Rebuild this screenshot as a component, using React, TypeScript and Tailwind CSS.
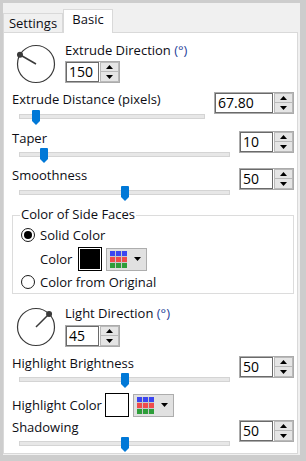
import React from "react";

function Up() {
  return (
    <svg width="7" height="4" viewBox="0 0 7 4">
      <path d="M0 4 L3.5 0 L7 4 Z" fill="#000" />
    </svg>
  );
}
function Down() {
  return (
    <svg width="7" height="4" viewBox="0 0 7 4">
      <path d="M0 0 L7 0 L3.5 4 Z" fill="#000" />
    </svg>
  );
}

function Spin({ value, outerW, inputW }: { value: string; outerW: string; inputW: string }) {
  return (
    <div className={`${outerW} h-[22px] shrink-0 flex border border-[#ababab] bg-white`}>
      <div
        className={`${inputW} h-full border border-[#6a6a6a] flex items-center pl-[2px] text-[14px] leading-none text-black`}
      >
        {value}
      </div>
      <div className="ml-[1px] w-[19px] h-full flex flex-col border border-[#b9b9b9] bg-[#e5e5e5]">
        <div className="h-1/2 flex items-center justify-center border-b border-[#b9b9b9]">
          <Up />
        </div>
        <div className="flex-1 flex items-center justify-center">
          <Down />
        </div>
      </div>
    </div>
  );
}

function Slider({ trackW, frac, mt }: { trackW: number; frac: number; mt: string }) {
  const center = 7 + 4.25 + frac * (trackW - 8.5);
  return (
    <div className={`relative h-[15px] ${mt}`}>
      <div
        className="mt-[4px] ml-[7px] h-[5px] bg-[#e7e7e7] border border-[#d4d4d4]"
        style={{ width: trackW }}
      />
      <svg
        className="absolute top-0"
        style={{ left: center - 4 }}
        width="8"
        height="15"
        viewBox="0 0 8 15"
      >
        <path d="M0 1 Q0 0 1 0 H7 Q8 0 8 1 V11 L4 15 L0 11 Z" fill="#0078d7" />
      </svg>
    </div>
  );
}

function Dial({ angle, mt }: { angle: number; mt: string }) {
  const a = (angle * Math.PI) / 180;
  const r = 18.5;
  const dx = 20 + r * Math.cos(a);
  const dy = 20 - r * Math.sin(a);
  return (
    <svg className={`ml-[4px] shrink-0 ${mt}`} width="40" height="40" viewBox="0 0 40 40">
      <circle cx="20" cy="20" r="18.5" fill="none" stroke="#3a3a3a" strokeWidth="1.2" />
      <line x1="20" y1="20" x2={dx} y2={dy} stroke="#3a3a3a" strokeWidth="1.5" />
      <circle cx={dx} cy={dy} r="3" fill="#3a3a3a" />
    </svg>
  );
}

function Radio({ checked }: { checked?: boolean }) {
  return (
    <div className="w-[14px] h-[14px] rounded-full border border-[#1a1a1a] bg-white flex items-center justify-center shrink-0">
      {checked && <div className="w-[8px] h-[8px] rounded-full bg-black" />}
    </div>
  );
}

function ColorDrop() {
  const cells = [
    "#3c46f0", "#3c46f0", "#3c46f0",
    "#f04b4b", "#f04b4b", "#f04b4b",
    "#2e9e3a", "#2e9e3a", "#2e9e3a",
  ];
  return (
    <div className="ml-[4px] w-[41px] h-[23px] border border-[#adadad] bg-[#e1e1e1] flex items-center pl-[3px]">
      <div className="grid grid-cols-3 gap-[1px] bg-[#c8c8c8] w-[17px] h-[17px]">
        {cells.map((c, i) => (
          <div key={i} style={{ background: c }} />
        ))}
      </div>
      <svg className="ml-[7px]" width="7" height="4" viewBox="0 0 7 4">
        <path d="M0 0 L7 0 L3.5 4 Z" fill="#000" />
      </svg>
    </div>
  );
}

function Deg() {
  return <span className="text-[#1f3f99]">(°)</span>;
}

export default function App() {
  return (
    <div className="w-[306px] h-[461px] bg-[#cdcdcd] pl-[3px] pt-[3px] [font-family:'Open_Sans',sans-serif] text-[13px] text-[#0d0d14]">
      <div className="w-[297px] h-[452px] bg-[#f0f0f0] flex flex-col">
        <div className="h-[29px] flex items-end shrink-0">
          <div className="w-[60px] h-[19px] border border-b-0 border-[#d9d9d9] flex justify-center pt-[2px] leading-[15px]">
            Settings
          </div>
          <div className="relative z-10 -mb-px w-[50px] h-[24px] bg-white border border-b-0 border-[#d9d9d9] flex justify-center pt-[2px] leading-[15px]">
            Basic
          </div>
        </div>
        <div className="w-[295px] h-[422px] bg-white border border-[#d9d9d9] flex flex-col pl-[8px] pr-[3px]">
          {/* Extrude direction */}
          <div className="mt-[10px] flex items-start">
            <Dial angle={150} mt="mt-[1px]" />
            <div className="ml-[9px] flex flex-col">
              <div className="h-[15px] leading-[15px] whitespace-nowrap">
                Extrude Direction <Deg />
              </div>
              <div className="mt-[3px]">
                <Spin value="150" outerW="w-[55px]" inputW="w-[33px]" />
              </div>
            </div>
          </div>

          {/* Extrude distance */}
          <div className="mt-[8px] flex items-start justify-between">
            <div className="flex flex-col">
              <div className="h-[15px] leading-[15px] whitespace-nowrap">Extrude Distance (pixels)</div>
              <Slider trackW={186} frac={0.072} mt="mt-[3px]" />
            </div>
            <Spin value="67.80" outerW="w-[80px]" inputW="w-[58px]" />
          </div>

          {/* Taper */}
          <div className="mt-[6px] flex items-start justify-between">
            <div className="flex flex-col">
              <div className="h-[15px] leading-[15px]">Taper</div>
              <Slider trackW={211} frac={0.1} mt="mt-[2px]" />
            </div>
            <Spin value="10" outerW="w-[55px]" inputW="w-[33px]" />
          </div>

          {/* Smoothness */}
          <div className="mt-[5px] flex items-start justify-between">
            <div className="flex flex-col">
              <div className="h-[15px] leading-[15px]">Smoothness</div>
              <Slider trackW={211} frac={0.5} mt="mt-[3px]" />
            </div>
            <Spin value="50" outerW="w-[55px]" inputW="w-[33px]" />
          </div>

          {/* Group */}
          <fieldset className="mt-[7px] border border-[#dcdcdc] pl-[8px] pb-[3px]">
            <legend className="ml-[-1px] px-[1px] h-[15px] leading-[12px]">Color of Side Faces</legend>
            <div className="mt-[4px] h-[16px] flex items-center">
              <Radio checked />
              <span className="ml-[5px] leading-[15px]">Solid Color</span>
            </div>
            <div className="mt-[4px] h-[24px] flex items-center ml-[19px]">
              <span className="w-[38px] leading-[15px]">Color</span>
              <div className="w-[24px] h-[24px] border border-black p-[1px] bg-white">
                <div className="w-full h-full bg-black" />
              </div>
              <ColorDrop />
            </div>
            <div className="mt-[3px] h-[16px] flex items-center">
              <Radio />
              <span className="ml-[5px] leading-[15px]">Color from Original</span>
            </div>
          </fieldset>

          {/* Light direction */}
          <div className="mt-[12px] flex items-start">
            <Dial angle={45} mt="mt-[1px]" />
            <div className="ml-[9px] flex flex-col">
              <div className="h-[15px] leading-[15px] whitespace-nowrap">
                Light Direction <Deg />
              </div>
              <div className="mt-[4px]">
                <Spin value="45" outerW="w-[55px]" inputW="w-[33px]" />
              </div>
            </div>
          </div>

          {/* Highlight brightness */}
          <div className="mt-[9px] flex items-start justify-between">
            <div className="flex flex-col">
              <div className="h-[15px] leading-[15px]">Highlight Brightness</div>
              <Slider trackW={211} frac={0.5} mt="mt-[2px]" />
            </div>
            <Spin value="50" outerW="w-[55px]" inputW="w-[33px]" />
          </div>

          {/* Highlight color */}
          <div className="mt-[5px] h-[24px] flex items-center">
            <span className="w-[93px] leading-[15px] whitespace-nowrap">Highlight Color</span>
            <div className="w-[24px] h-[24px] border border-black bg-white" />
            <ColorDrop />
          </div>

          {/* Shadowing */}
          <div className="mt-[3px] flex items-start justify-between">
            <div className="flex flex-col">
              <div className="h-[15px] leading-[15px]">Shadowing</div>
              <Slider trackW={211} frac={0.5} mt="mt-[2px]" />
            </div>
            <Spin value="50" outerW="w-[55px]" inputW="w-[33px]" />
          </div>
        </div>
      </div>
    </div>
  );
}
